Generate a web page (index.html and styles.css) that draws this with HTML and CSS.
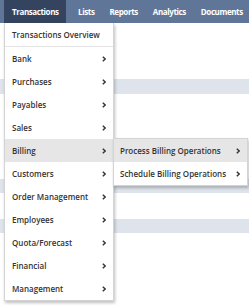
FILE: index.html
```html
<!DOCTYPE html>
<html>
<head>
<meta charset="utf-8">
<link rel="stylesheet" href="styles.css">
</head>
<body>
<nav class="navbar">
  <div class="tab active">Transactions
    <div class="menu">
      <div class="item overview">Transactions Overview</div>
      <div class="item">Bank<svg class="chev" viewBox="0 0 4 6"><path d="M0.8 0.7 L3.2 3 L0.8 5.3"/></svg></div>
      <div class="item">Purchases<svg class="chev" viewBox="0 0 4 6"><path d="M0.8 0.7 L3.2 3 L0.8 5.3"/></svg></div>
      <div class="item">Payables<svg class="chev" viewBox="0 0 4 6"><path d="M0.8 0.7 L3.2 3 L0.8 5.3"/></svg></div>
      <div class="item">Sales<svg class="chev" viewBox="0 0 4 6"><path d="M0.8 0.7 L3.2 3 L0.8 5.3"/></svg></div>
      <div class="item hover">Billing<svg class="chev" viewBox="0 0 4 6"><path d="M0.8 0.7 L3.2 3 L0.8 5.3"/></svg>
        <div class="submenu">
          <div class="item hover">Process Billing Operations<svg class="chev" viewBox="0 0 4 6"><path d="M0.8 0.7 L3.2 3 L0.8 5.3"/></svg></div>
          <div class="item">Schedule Billing Operations<svg class="chev" viewBox="0 0 4 6"><path d="M0.8 0.7 L3.2 3 L0.8 5.3"/></svg></div>
        </div>
      </div>
      <div class="item">Customers<svg class="chev" viewBox="0 0 4 6"><path d="M0.8 0.7 L3.2 3 L0.8 5.3"/></svg></div>
      <div class="item">Order Management<svg class="chev" viewBox="0 0 4 6"><path d="M0.8 0.7 L3.2 3 L0.8 5.3"/></svg></div>
      <div class="item">Employees<svg class="chev" viewBox="0 0 4 6"><path d="M0.8 0.7 L3.2 3 L0.8 5.3"/></svg></div>
      <div class="item">Quota/Forecast<svg class="chev" viewBox="0 0 4 6"><path d="M0.8 0.7 L3.2 3 L0.8 5.3"/></svg></div>
      <div class="item">Financial<svg class="chev" viewBox="0 0 4 6"><path d="M0.8 0.7 L3.2 3 L0.8 5.3"/></svg></div>
      <div class="item">Management<svg class="chev" viewBox="0 0 4 6"><path d="M0.8 0.7 L3.2 3 L0.8 5.3"/></svg></div>
    </div>
  </div>
  <div class="tab lists">Lists</div>
  <div class="tab">Reports</div>
  <div class="tab">Analytics</div>
  <div class="tab">Documents</div>
</nav>
<main class="content">
  <div class="gap g1"></div>
  <div class="stripe s1"></div>
  <div class="gap g2"></div>
  <div class="stripe s2"></div>
  <div class="gap g3"></div>
  <div class="stripe s3"></div>
  <div class="gap g4"></div>
</main>
</body>
</html>
```
FILE: styles.css
```css
html, body {
  margin: 0;
  padding: 0;
  background: #ffffff;
  font-family: "Open Sans", "Liberation Sans", sans-serif;
}
.navbar {
  display: flex;
  height: 23px;
  background: #5f7698;
  padding-left: 4px;
  white-space: nowrap;
  overflow: visible;
}
.tab {
  position: relative;
  color: #ffffff;
  font-weight: 700;
  font-size: 8px;
  letter-spacing: -0.4px;
  line-height: 23px;
  padding: 0 7.5px;
}
.tab.active {
  background: #34445f;
  padding: 0 7px 0 8px;
}
.tab.lists {
  margin-left: 5px;
}
.menu {
  position: absolute;
  left: 0;
  top: 23px;
  width: 108px;
  background: #ffffff;
  border: 1px solid #d4d4d4;
  border-top: none;
  box-shadow: 1px 2px 3px rgba(0,0,0,0.25);
  z-index: 5;
  letter-spacing: 0;
}
.item {
  position: relative;
  display: flex;
  justify-content: space-between;
  align-items: center;
  height: 23px;
  padding: 0 7px 0 7px;
  color: #333333;
  font-weight: 600;
  font-size: 8px;
  letter-spacing: 0;
}
.item.overview {
  border-bottom: 1px solid #e3e3e3;
}
.item.hover {
  background: #e6e6e6;
}
.chev {
  width: 4px;
  height: 6px;
  fill: none;
  stroke: #333333;
  stroke-width: 1.4;
}
.submenu {
  position: absolute;
  left: 108px;
  top: -1px;
  width: 133px;
  background: #fff;
  border: 1px solid #d4d4d4;
  box-shadow: 1px 2px 3px rgba(0,0,0,0.25);
}
.submenu .item {
  padding: 0 7px 0 6px;
}
.content {
  display: flex;
  flex-direction: column;
}
.gap.g1 { height: 56px; }
.stripe { background: #dfe4ec; }
.stripe.s1 { height: 15px; }
.gap.g2 { height: 85px; }
.stripe.s2 { height: 14px; }
.gap.g3 { height: 26px; }
.stripe.s3 { height: 14px; }
.gap.g4 { height: 72px; }
```
